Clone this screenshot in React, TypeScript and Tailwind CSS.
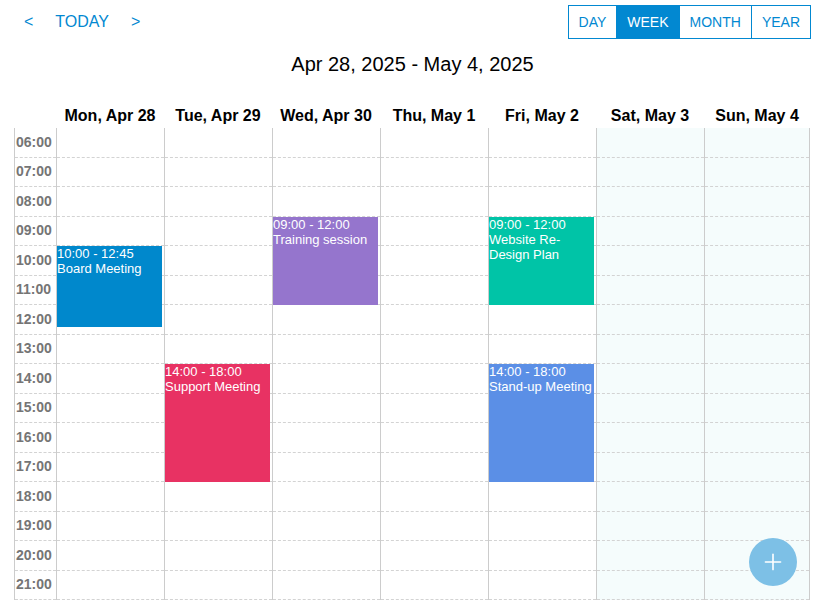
import { Plus } from 'lucide-react'

const days = [
  { label: 'Mon, Apr 28', weekend: false },
  { label: 'Tue, Apr 29', weekend: false },
  { label: 'Wed, Apr 30', weekend: false },
  { label: 'Thu, May 1', weekend: false },
  { label: 'Fri, May 2', weekend: false },
  { label: 'Sat, May 3', weekend: true },
  { label: 'Sun, May 4', weekend: true },
]

const hours = ['06:00', '07:00', '08:00', '09:00', '10:00', '11:00', '12:00', '13:00', '14:00', '15:00', '16:00', '17:00', '18:00', '19:00', '20:00', '21:00']

const HOUR = 29.5

type CalEvent = { day: number; start: number; end: number; time: string; title: string; color: string }

const events: CalEvent[] = [
  { day: 0, start: 10, end: 12.75, time: '10:00 - 12:45', title: 'Board Meeting', color: 'bg-[#0088cc]' },
  { day: 1, start: 14, end: 18, time: '14:00 - 18:00', title: 'Support Meeting', color: 'bg-[#e83263]' },
  { day: 2, start: 9, end: 12, time: '09:00 - 12:00', title: 'Training session', color: 'bg-[#9575cd]' },
  { day: 4, start: 9, end: 12, time: '09:00 - 12:00', title: 'Website Re-Design Plan', color: 'bg-[#00c4a7]' },
  { day: 4, start: 14, end: 18, time: '14:00 - 18:00', title: 'Stand-up Meeting', color: 'bg-[#5b8fe6]' },
]

const views = ['DAY', 'WEEK', 'MONTH', 'YEAR']

function DayColumn({ index, weekend, last }: { index: number; weekend: boolean; last: boolean }) {
  return (
    <div
      className={`relative border-l border-[#cccccc] ${last ? 'w-[106px] border-r' : 'w-[108px]'} ${weekend ? 'bg-[#f5fcfc]' : ''}`}
    >
      {hours.map(h => (
        <div key={h} className="h-[29.5px] border-b border-dashed border-[#d3d3d3]" />
      ))}
      {events
        .filter(e => e.day === index)
        .map(e => (
          <div
            key={e.title}
            className={`absolute left-0 w-[105px] overflow-hidden text-[13px] leading-[15px] text-white ${e.color}`}
            style={{ top: (e.start - 6) * HOUR, height: (e.end - e.start) * HOUR }}
          >
            <div>{e.time}</div>
            <div>{e.title}</div>
          </div>
        ))}
    </div>
  )
}

export default function App() {
  return (
    <div className="relative h-[603px] w-[819px] overflow-hidden bg-white font-['Liberation_Sans',Arial,sans-serif] text-black">
      <div className="flex items-start justify-between pt-[5px] pr-[8px]">
        <div className="flex h-[34px] items-center text-base text-[#0288d1]">
          <span className="ml-[24px]">&lt;</span>
          <span className="ml-[22px]">TODAY</span>
          <span className="ml-[22px]">&gt;</span>
        </div>
        <div className="flex h-[34px] border border-[#0288d1] text-[14px] text-[#0288d1]">
          {views.map((v, i) => (
            <div
              key={v}
              className={`flex items-center px-[10px] ${i > 0 ? 'border-l border-[#0288d1]' : ''} ${v === 'WEEK' ? 'bg-[#0288d1] text-white' : ''}`}
            >
              {v}
            </div>
          ))}
        </div>
      </div>

      <div className="mt-[13px] h-[24px] pl-[6px] text-center text-[20px] leading-[24px]">Apr 28, 2025 - May 4, 2025</div>

      <div className="mt-[28px] ml-[14px] flex h-[24px] items-center">
        <div className="w-[42px]" />
        {days.map((d, i) => (
          <div key={d.label} className={`${i === 6 ? 'w-[106px]' : 'w-[108px]'} text-center text-base font-bold`}>
            {d.label}
          </div>
        ))}
      </div>

      <div className="ml-[14px] flex">
        <div className="w-[42px] border-l border-[#cccccc]">
          {hours.map(h => (
            <div
              key={h}
              className="flex h-[29.5px] items-center border-b border-dashed border-[#d3d3d3] pl-[1px] text-[14px] font-bold text-[#757575]"
            >
              {h}
            </div>
          ))}
        </div>
        {days.map((d, i) => (
          <DayColumn key={d.label} index={i} weekend={d.weekend} last={i === 6} />
        ))}
      </div>

      <button className="absolute top-[538px] left-[749px] flex h-[48px] w-[48px] items-center justify-center rounded-full bg-[#7dc0e6] text-white">
        <Plus size={26} strokeWidth={1.5} />
      </button>
    </div>
  )
}
